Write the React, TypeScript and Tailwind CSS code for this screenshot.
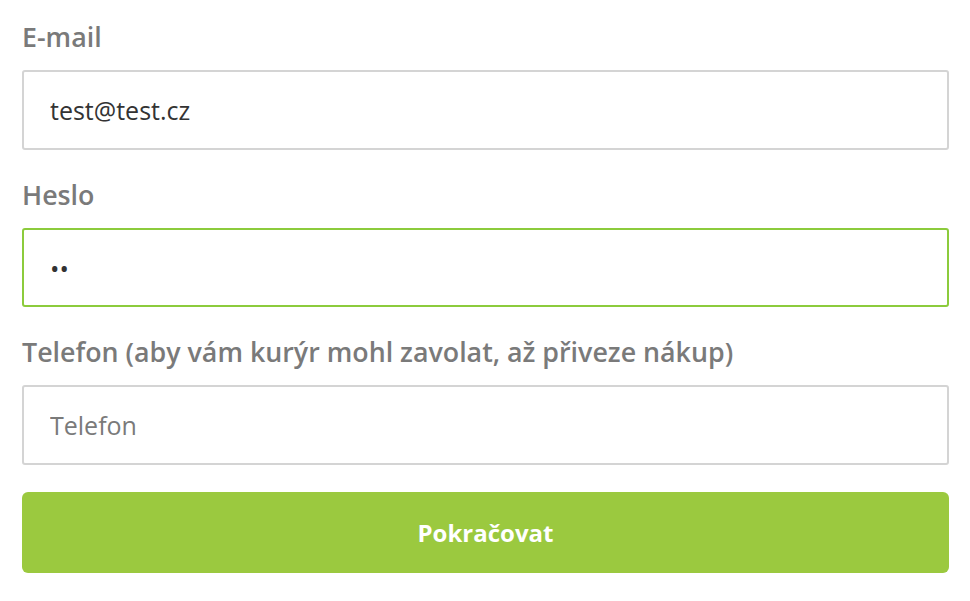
export default function App() {
  const font = { fontFamily: '"Open Sans", "Noto Sans", sans-serif' };
  return (
    <div className="min-h-screen bg-white px-[22px] pt-[19px]" style={font}>
      <form className="flex w-[927px] flex-col">
        {/* E-mail */}
        <label className="mb-[15px] block text-[26.8px] font-semibold leading-[36px] text-[#7a7a7a]">E-mail</label>
        <input
          type="email"
          defaultValue="test@test.cz"
          className="h-[80px] w-full rounded-[3px] border-2 border-[#d4d4d4] bg-white px-[26px] text-[25px] text-[#333] outline-none"
        />

        {/* Heslo */}
        <label className="mb-[15px] mt-[27px] block text-[26.8px] font-semibold leading-[36px] text-[#7a7a7a]">Heslo</label>
        <input
          type="password"
          defaultValue="ab"
          className="h-[79px] w-full rounded-[3px] border-2 border-[#8ccb3c] bg-white px-[26px] text-[25px] text-[#333] outline-none"
        />

        {/* Telefon */}
        <label className="mb-[15px] mt-[27px] block text-[26.8px] font-semibold leading-[36px] text-[#7a7a7a]">
          Telefon (aby vám kurýr mohl zavolat, až přiveze nákup)
        </label>
        <input
          type="tel"
          placeholder="Telefon"
          className="h-[80px] w-full rounded-[3px] border-2 border-[#d4d4d4] bg-white px-[26px] text-[25px] text-[#333] outline-none placeholder:text-[#7a7a7a]"
        />

        <button
          type="submit"
          className="mt-[27px] h-[81px] w-full rounded-[6px] bg-[#9bc93f] text-[24px] font-bold text-white"
        >
          Pokračovat
        </button>
      </form>
    </div>
  );
}
